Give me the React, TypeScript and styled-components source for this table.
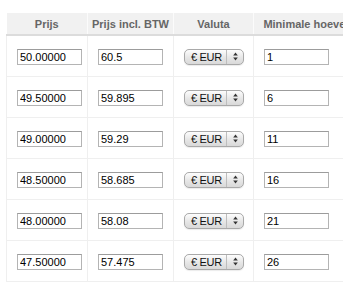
import styled, { createGlobalStyle } from 'styled-components'

const GlobalStyle = createGlobalStyle`
  html, body {
    margin: 0;
    padding: 0;
    background: #fff;
    overflow: hidden;
  }
`

const rows = [
  { prijs: '50.00000', btw: '60.5', min: '1' },
  { prijs: '49.50000', btw: '59.895', min: '6' },
  { prijs: '49.00000', btw: '59.29', min: '11' },
  { prijs: '48.50000', btw: '58.685', min: '16' },
  { prijs: '48.00000', btw: '58.08', min: '21' },
  { prijs: '47.50000', btw: '57.475', min: '26' },
]

const App = () => {
  return (
    <>
      <GlobalStyle />
      <Page>
        <Table>
          <colgroup>
            <col style={{ width: 81 }} />
            <col style={{ width: 86 }} />
            <col style={{ width: 80 }} />
            <col style={{ width: 133 }} />
          </colgroup>
          <thead>
            <tr>
              <Th>Prijs</Th>
              <Th>Prijs incl. BTW</Th>
              <Th>Valuta</Th>
              <Th>Minimale hoeveelheid</Th>
            </tr>
          </thead>
          <tbody>
            {rows.map((r) => (
              <tr key={r.min}>
                <Td>
                  <TextInput defaultValue={r.prijs} />
                </Td>
                <Td>
                  <TextInput defaultValue={r.btw} />
                </Td>
                <Td>
                  <Select>
                    <SelectLabel>€ EUR</SelectLabel>
                    <SelectArrows>
                      <svg width="5" height="9" viewBox="0 0 5 9">
                        <path d="M2.5 0.5 L4.8 3.6 L0.2 3.6 Z" fill="#333" />
                        <path d="M2.5 8.5 L4.8 5.4 L0.2 5.4 Z" fill="#333" />
                      </svg>
                    </SelectArrows>
                  </Select>
                </Td>
                <Td>
                  <TextInput defaultValue={r.min} />
                </Td>
              </tr>
            ))}
          </tbody>
        </Table>
      </Page>
    </>
  )
}

const Page = styled.div`
  width: 343px;
  height: 289px;
  overflow: hidden;
  padding: 13px 0 0 6px;
  box-sizing: border-box;
  font-family: 'Liberation Sans', Arial, sans-serif;
`

const Table = styled.table`
  border-collapse: collapse;
  table-layout: fixed;
  width: 380px;
`

const Th = styled.th`
  height: 21px;
  padding: 0;
  background: #f1f1f1;
  color: #666;
  font-size: 11px;
  font-weight: bold;
  text-align: center;
  white-space: nowrap;
  border-bottom: 2px solid #dcdcdc;
  border-left: 1px solid #fbfbfb;
  &:first-child {
    border-left: none;
  }
`

const Td = styled.td`
  height: 40px;
  padding: 0 0 0 10px;
  border: 1px solid #efefef;
  border-top: none;
  vertical-align: middle;
`

const TextInput = styled.input`
  display: block;
  box-sizing: border-box;
  width: 65px;
  height: 16px;
  margin: 1px 0 0 0;
  padding: 0 2px;
  border: 1px solid #b4b4b4;
  border-top-color: #9c9c9c;
  font-family: 'Liberation Sans', Arial, sans-serif;
  font-size: 11px;
  color: #000;
  background: #fff;
  outline: none;
`

const Select = styled.div`
  display: flex;
  align-items: stretch;
  box-sizing: border-box;
  width: 60px;
  height: 16px;
  margin-top: 1px;
  border: 1px solid #a9a9a9;
  border-radius: 5px;
  background: linear-gradient(#fdfdfd, #e6e6e6 55%, #d9d9d9);
  box-shadow: 0 1px 1px rgba(0, 0, 0, 0.08);
`

const SelectLabel = styled.span`
  flex: 1;
  padding-left: 6px;
  font-size: 11px;
  line-height: 14px;
  color: #111;
  letter-spacing: -0.3px;
`

const SelectArrows = styled.span`
  display: flex;
  align-items: center;
  justify-content: center;
  width: 16px;
  border-left: 1px solid #bdbdbd;
`

export default App
